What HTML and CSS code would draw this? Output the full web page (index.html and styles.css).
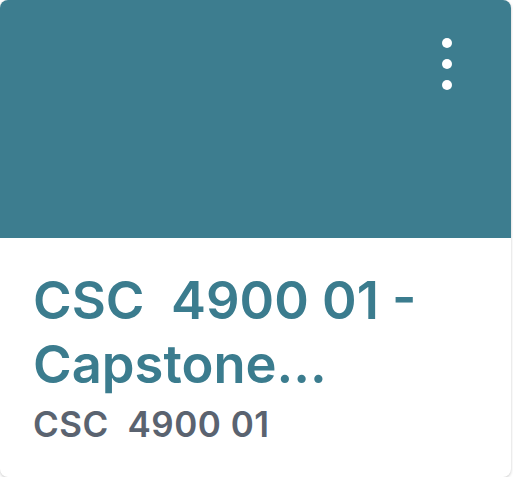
FILE: index.html
```html
<!DOCTYPE html>
<html lang="en">
<head>
<meta charset="utf-8">
<title>Course card</title>
<link rel="stylesheet" href="styles.css">
</head>
<body>
<div class="card">
  <div class="hero">
    <button class="menu" aria-label="More options">
      <span class="dot"></span>
      <span class="dot"></span>
      <span class="dot"></span>
    </button>
  </div>
  <div class="info">
    <h2 class="title">CSC&nbsp; 4900 01 - Capstone...</h2>
    <div class="code">CSC&nbsp; 4900 01</div>
  </div>
</div>
</body>
</html>
```

FILE: styles.css
```css
* { box-sizing: border-box; }
html, body { margin: 0; padding: 0; background: #ffffff; }
body { font-family: "Inter", "Liberation Sans", sans-serif; }

.card {
  width: 511px;
  height: 477px;
  border-radius: 8px;
  overflow: hidden;
  background: #ffffff;
  box-shadow: 0 1px 3px rgba(0, 0, 0, 0.22);
  display: flex;
  flex-direction: column;
}

.hero {
  height: 238px;
  flex: none;
  background: #3d7d8f;
  display: flex;
  justify-content: flex-end;
  align-items: flex-start;
  padding: 38px 59px 0 0;
}

.menu {
  border: 0;
  background: none;
  padding: 0;
  display: flex;
  flex-direction: column;
  gap: 11px;
  cursor: pointer;
}

.dot {
  width: 10px;
  height: 10px;
  border-radius: 50%;
  background: #ffffff;
  display: block;
}

.info {
  padding: 30px 20px 0 33px;
}

.title {
  margin: 0;
  font-size: 52.5px;
  line-height: 64px;
  font-weight: 600;
  color: #3b7c8e;
}

.code {
  margin-top: 7px;
  font-size: 35px;
  line-height: 42px;
  font-weight: 600;
  letter-spacing: 0.5px;
  color: #5a6370;
}
```
